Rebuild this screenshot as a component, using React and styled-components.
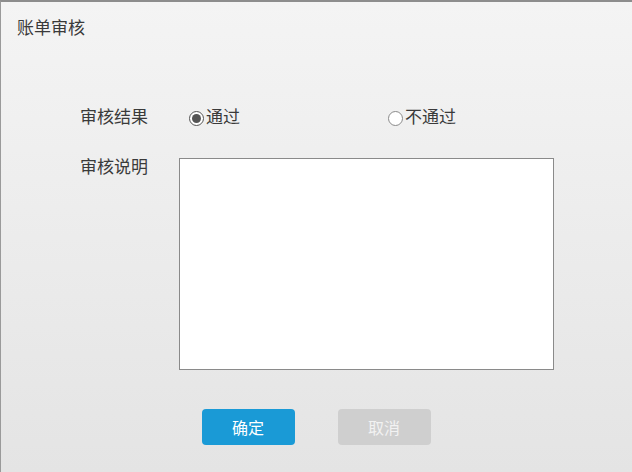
import styled, { createGlobalStyle } from 'styled-components';
import { useState } from 'react';

const GlobalStyle = createGlobalStyle`
	html, body {
		margin: 0;
		padding: 0;
	}
	body {
		font-family: 'Liberation Sans', 'Noto Sans CJK SC', sans-serif;
		color: #333;
	}
`;

const Dialog = styled.div`
	width: 632px;
	height: 472px;
	box-sizing: border-box;
	border-top: 2px solid #8d8d8d;
	border-left: 1px solid #9a9a9a;
	background: linear-gradient(#f4f4f4, #e4e4e4);
	display: flex;
	flex-direction: column;
`;

const Title = styled.h2`
	margin: 0;
	padding: 17px 0 0 16px;
	font-size: 17px;
	line-height: 20px;
	font-weight: normal;
	color: #3a3a3a;
`;

const Form = styled.div`
	margin-top: 67px;
	padding-left: 79px;
	display: flex;
	flex-direction: column;
	gap: 28px;
`;

const Row = styled.div`
	display: flex;
	align-items: ${(p) => (p.$top ? 'flex-start' : 'center')};
	min-height: 24px;
`;

const Label = styled.span`
	width: 99px;
	font-size: 17px;
	line-height: 20px;
	color: #3a3a3a;
`;

const RadioGroup = styled.div`
	display: flex;
	margin-left: 10px;
`;

const Option = styled.label`
	width: 199px;
	display: flex;
	align-items: center;
	font-size: 17px;
	line-height: 20px;
	color: #3a3a3a;
	cursor: pointer;
`;

const Circle = styled.span`
	width: 15px;
	height: 15px;
	box-sizing: border-box;
	border-radius: 50%;
	border: 1px solid ${(p) => (p.$checked ? '#555' : '#8a8a8a')};
	background: #fff;
	display: flex;
	align-items: center;
	justify-content: center;
	margin-right: 2px;

	&::after {
		content: '';
		width: 9px;
		height: 9px;
		border-radius: 50%;
		background: ${(p) => (p.$checked ? '#555' : 'transparent')};
	}
`;

const TextArea = styled.textarea`
	width: 375px;
	height: 212px;
	box-sizing: border-box;
	border: 1px solid #8a8a8a;
	background: #fff;
	resize: none;
	outline: none;
	padding: 4px;
	font-family: inherit;
`;

const Actions = styled.div`
	margin-top: 39px;
	display: flex;
	justify-content: center;
	gap: 43px;
	padding-right: 1px;
`;

const Button = styled.button`
	width: 93px;
	height: 36px;
	border: none;
	border-radius: 4px;
	font-size: 16px;
	font-family: inherit;
	color: ${(p) => (p.$primary ? '#fff' : '#f2f2f2')};
	background: ${(p) => (p.$primary ? '#1a9ad6' : '#cfcfcf')};
	cursor: pointer;
`;

const App = () => {
	const [result, setResult] = useState('pass');

	return (
		<>
			<GlobalStyle />
			<Dialog>
				<Title>账单审核</Title>
				<Form>
					<Row>
						<Label>审核结果</Label>
						<RadioGroup>
							<Option onClick={() => setResult('pass')}>
								<Circle $checked={result === 'pass'} />
								通过
							</Option>
							<Option onClick={() => setResult('fail')}>
								<Circle $checked={result === 'fail'} />
								不通过
							</Option>
						</RadioGroup>
					</Row>
					<Row $top>
						<Label>审核说明</Label>
						<TextArea />
					</Row>
				</Form>
				<Actions>
					<Button $primary>确定</Button>
					<Button>取消</Button>
				</Actions>
			</Dialog>
		</>
	);
};

export default App;
